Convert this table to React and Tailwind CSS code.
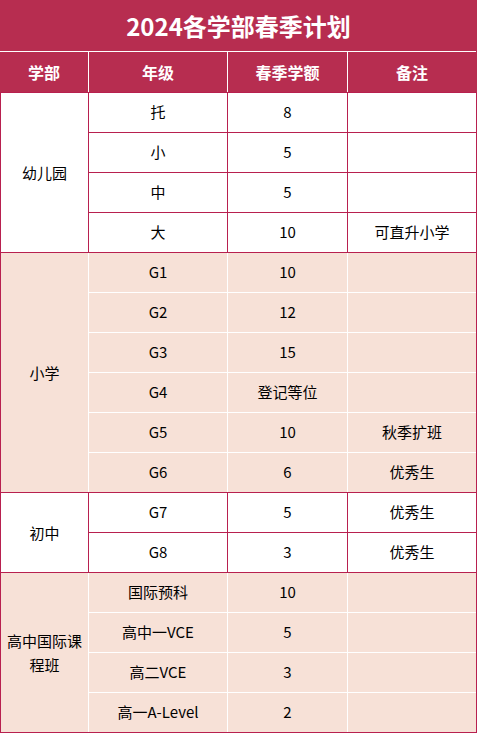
import React from "react";

const groups = [
  {
    name: "幼儿园",
    peach: false,
    rows: [
      ["托", "8", ""],
      ["小", "5", ""],
      ["中", "5", ""],
      ["大", "10", "可直升小学"],
    ],
  },
  {
    name: "小学",
    peach: true,
    rows: [
      ["G1", "10", ""],
      ["G2", "12", ""],
      ["G3", "15", ""],
      ["G4", "登记等位", ""],
      ["G5", "10", "秋季扩班"],
      ["G6", "6", "优秀生"],
    ],
  },
  {
    name: "初中",
    peach: false,
    rows: [
      ["G7", "5", "优秀生"],
      ["G8", "3", "优秀生"],
    ],
  },
  {
    name: "高中国际课程班",
    peach: true,
    rows: [
      ["国际预科", "10", ""],
      ["高中一VCE", "5", ""],
      ["高二VCE", "3", ""],
      ["高一A-Level", "2", ""],
    ],
  },
];

function Group({ g }) {
  const line = g.peach ? "border-white" : "border-[#b8204f]";
  const bg = g.peach ? "bg-[#f7e1d7]" : "bg-white";
  return (
    <div className={`flex border-b border-[#b8204f] ${bg}`}>
      <div
        className={`w-[88px] shrink-0 border-r ${line} flex items-center justify-center text-center px-1 leading-[24px]`}
      >
        {g.name}
      </div>
      <div className="flex-1 flex flex-col">
        {g.rows.map((r, i) => {
          const last = i === g.rows.length - 1;
          return (
            <div
              key={i}
              className={last ? "flex h-[39px]" : `flex h-[40px] border-b ${line}`}
            >
              <div className={`w-[139px] shrink-0 border-r ${line} flex items-center justify-center`}>
                {r[0]}
              </div>
              <div className={`w-[120px] shrink-0 border-r ${line} flex items-center justify-center`}>
                {r[1]}
              </div>
              <div className="flex-1 flex items-center justify-center">{r[2]}</div>
            </div>
          );
        })}
      </div>
    </div>
  );
}

export default function App() {
  return (
    <div
      className="w-[477px] bg-white text-black text-[15px]"
      style={{ fontFamily: '"Noto Sans CJK SC", "Noto Sans", sans-serif' }}
    >
      <div className="bg-[#b72d50]">
        <div className="h-[51px] flex items-center justify-center text-white font-bold text-[24px]">
          2024各学部春季计划
        </div>
        <div className="w-[476px] h-px bg-white" />
        <div className="flex h-[41px] border-b border-[#b8204f] text-white font-bold text-[16px]">
          <div className="w-[89px] shrink-0 border-r border-white flex items-center justify-center">学部</div>
          <div className="w-[139px] shrink-0 border-r border-white flex items-center justify-center">年级</div>
          <div className="w-[120px] shrink-0 border-r border-white flex items-center justify-center">春季学额</div>
          <div className="w-[128px] shrink-0 flex items-center justify-center">备注</div>
        </div>
      </div>
      <div className="border-x border-[#b8204f]">
        {groups.map((g, i) => (
          <Group key={i} g={g} />
        ))}
      </div>
    </div>
  );
}
